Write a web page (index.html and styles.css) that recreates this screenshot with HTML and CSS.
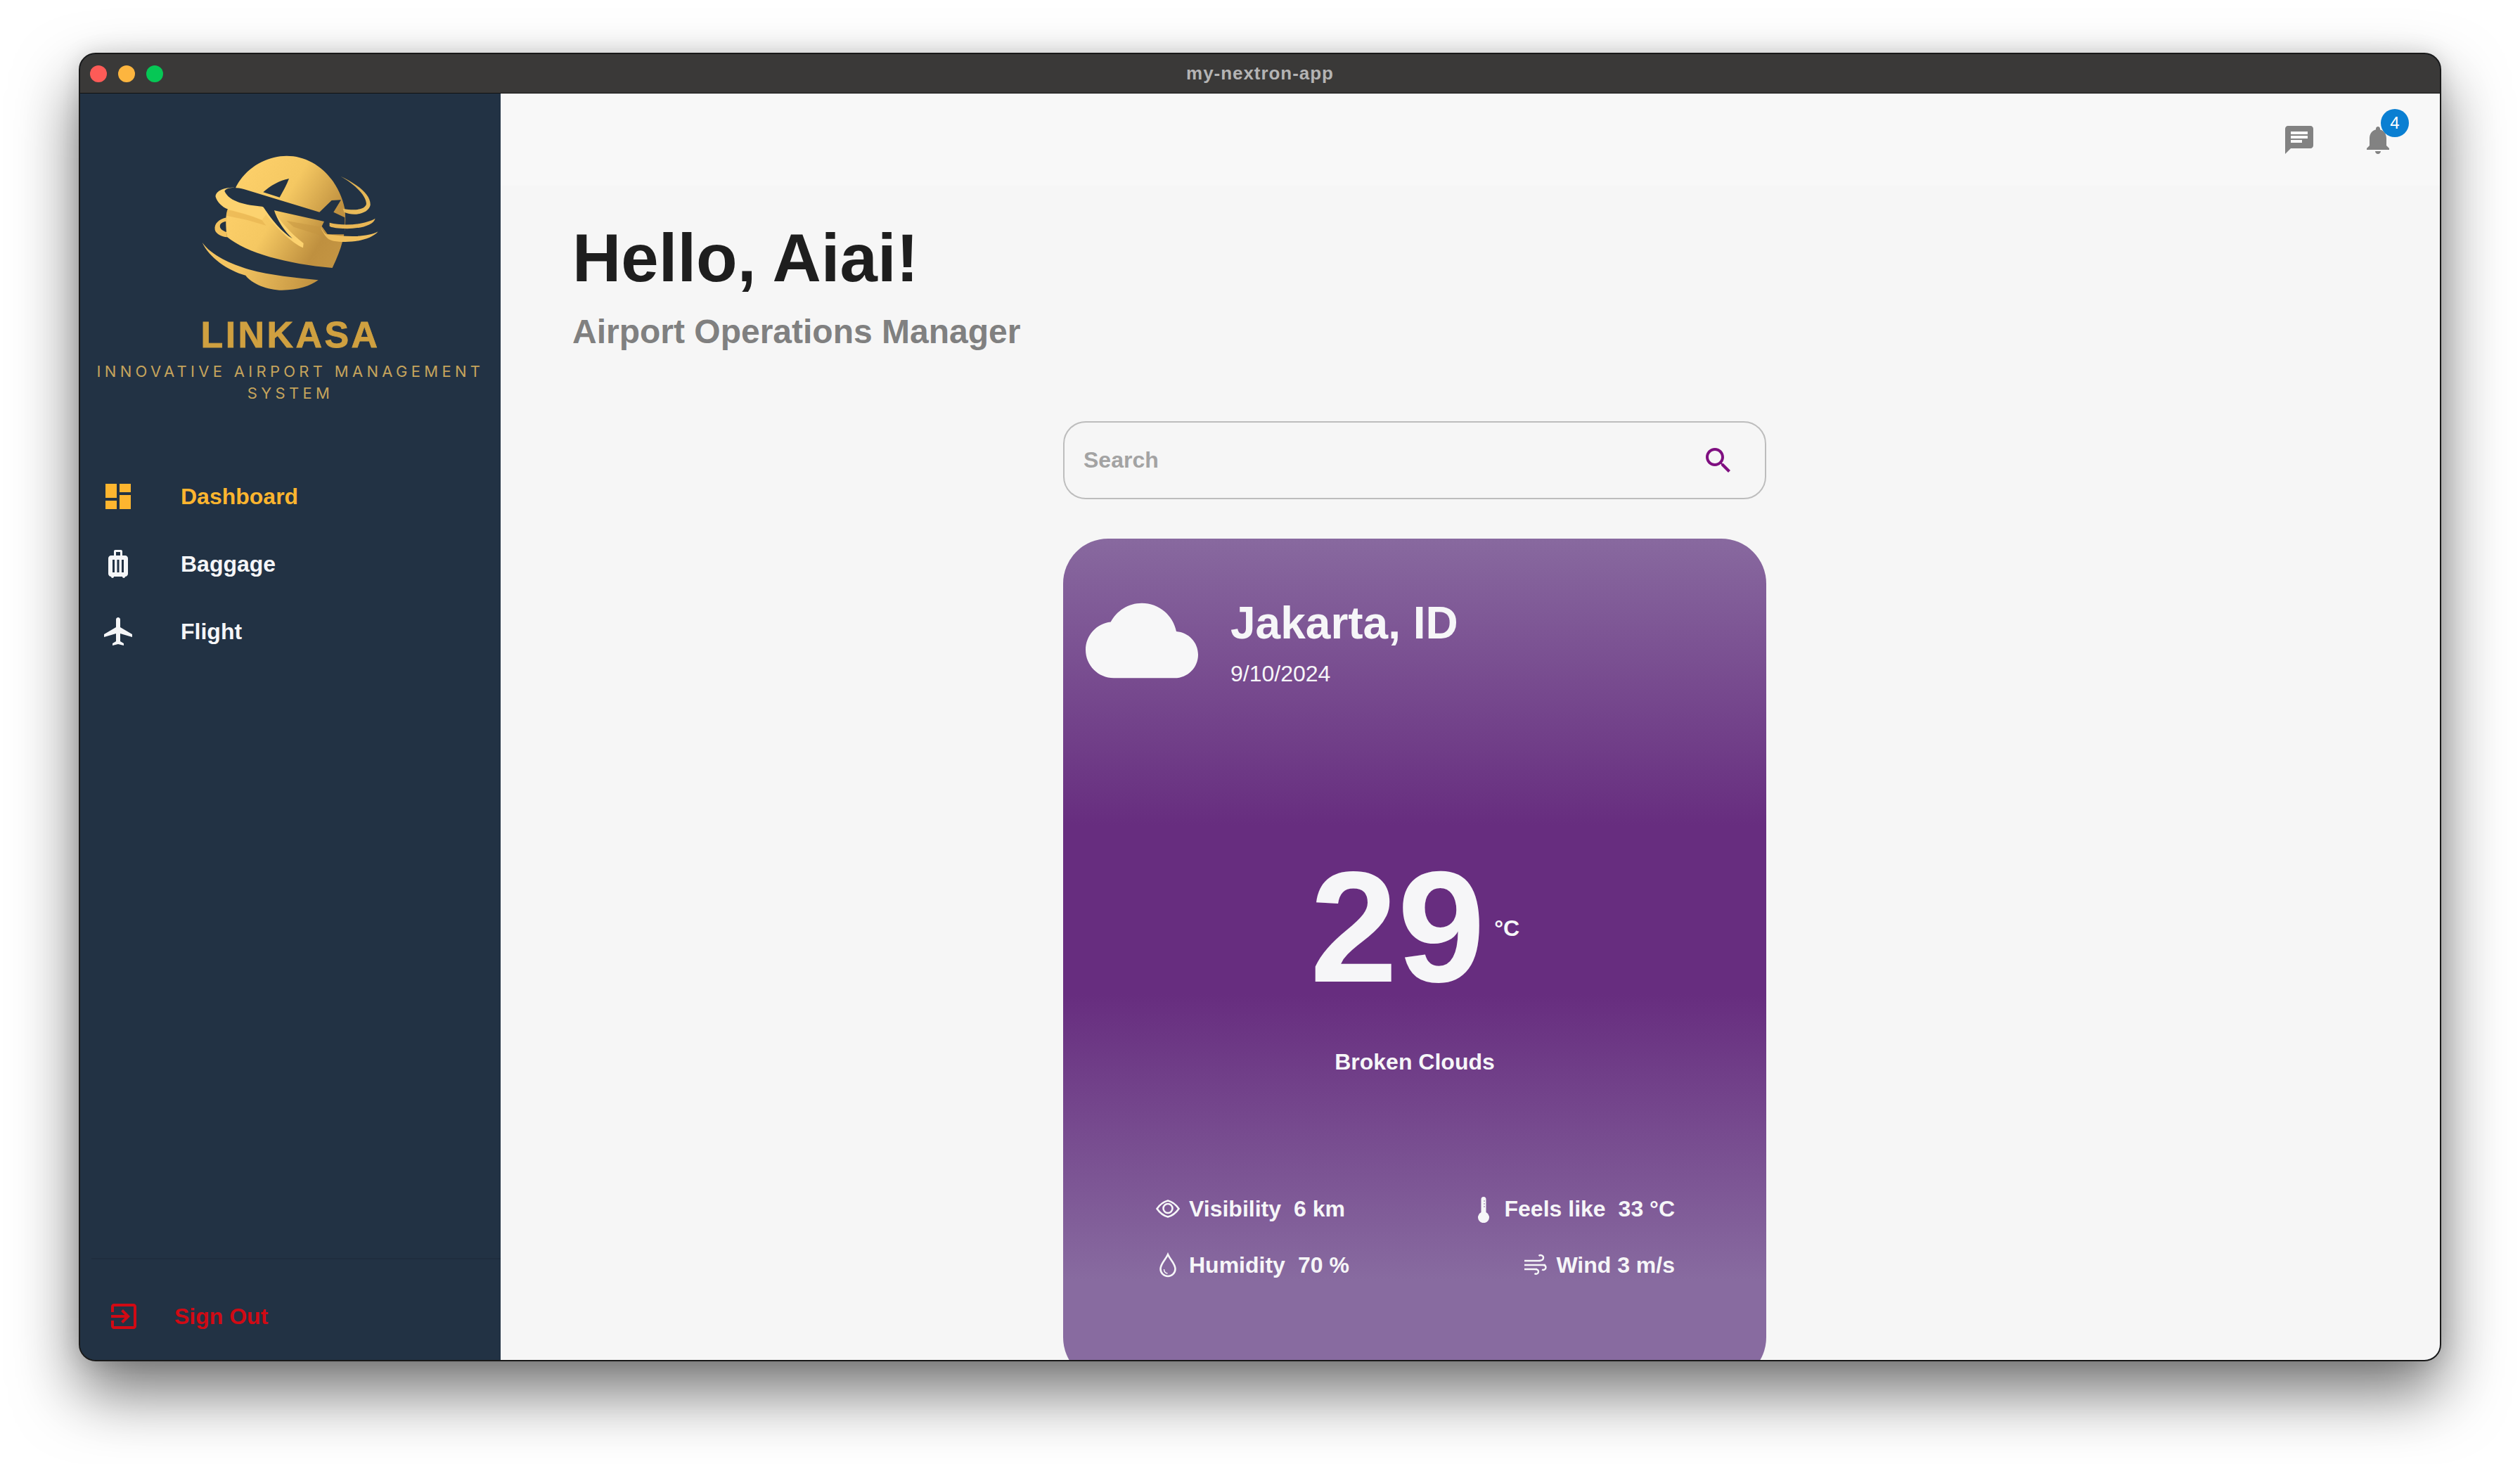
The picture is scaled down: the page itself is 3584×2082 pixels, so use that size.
FILE: index.html
```html
<!DOCTYPE html>
<html lang="en">
<head>
<meta charset="utf-8">
<title>my-nextron-app</title>
<link rel="stylesheet" href="styles.css">
</head>
<body>
<div class="window">
  <header class="titlebar">
    <div class="lights"><span class="light red"></span><span class="light yellow"></span><span class="light green"></span></div>
    <div class="title">my-nextron-app</div>
    <div></div>
  </header>
  <div class="app">
    <aside class="sidebar">
      <div class="brand">
        <svg class="logo" viewBox="0 0 1032 750" aria-hidden="true">
          <defs>
            <linearGradient id="gold" gradientUnits="userSpaceOnUse" x1="260" y1="230" x2="740" y2="520">
              <stop offset="0" stop-color="#fdd06a"/>
              <stop offset=".4" stop-color="#f5c862"/>
              <stop offset=".8" stop-color="#bf903f"/>
              <stop offset="1" stop-color="#c49543"/>
            </linearGradient>
            <linearGradient id="goldlow" gradientUnits="userSpaceOnUse" x1="300" y1="560" x2="640" y2="660">
              <stop offset="0" stop-color="#f3c461"/>
              <stop offset="1" stop-color="#bd8e3d"/>
            </linearGradient>
            <linearGradient id="goldright" gradientUnits="userSpaceOnUse" x1="700" y1="180" x2="880" y2="460">
              <stop offset="0" stop-color="#d9aa4d"/>
              <stop offset="1" stop-color="#f6c964"/>
            </linearGradient>
          </defs>
          <path fill="url(#gold)" d="M285 225C330 140 420 95 500 95C620 95 720 190 748 320C757 400 745 470 695 573C500 555 330 510 245 440C238 380 240 340 250 320Z"/>
          <path fill="url(#goldlow)" d="M140 465C170 530 250 585 325 605C350 640 420 668 480 668C550 668 600 650 635 625C540 615 430 605 340 580C260 555 180 520 140 465Z"/>
          <path fill="#f2c25e" d="M245 358C210 365 190 385 194 410C198 428 222 440 246 442L243 420C226 414 212 405 216 390C220 380 233 375 243 375Z"/>
          <path fill="#fcd26f" d="M275 230C225 230 195 248 197 270C205 295 225 312 247 322C300 335 350 350 395 368L420 335L300 270Z"/>
          <path fill="#e3ae4c" fill-opacity=".55" d="M246 325C300 335 350 352 395 370L412 392L330 368L243 350Z"/>
          <path fill="#c4943f" fill-opacity=".5" d="M500 372L645 398L668 440L600 420L530 398Z"/>
          <path fill="#223244" d="M400 250C430 222 470 200 510 192C500 220 485 245 470 272Z"/>
          <path fill="#fcd26f" d="M388 312L440 325C470 370 515 425 572 468L570 487C525 470 440 390 388 312Z"/>
          <path fill="#223244" d="M395 305L445 322C460 372 490 415 525 448C478 418 438 370 395 305Z"/>
          <path fill="#223244" d="M235 245C245 228 285 228 320 238L640 335L692 285L732 283L700 335L748 358V430H675L650 395L660 375L445 327L395 311C330 305 255 292 235 245Z"/>
          <path fill="url(#goldright)" d="M730 182C800 215 860 260 857 305C850 340 790 355 745 335L740 320C790 330 835 325 840 300C840 260 780 210 730 182Z"/>
          <path fill="#e8b655" d="M683 380C740 395 830 390 878 362C870 395 800 408 740 405C710 403 690 400 683 395Z"/>
          <path fill="#f0bf5c" d="M645 398C655 415 662 430 675 430C750 440 840 445 890 418C860 455 770 470 700 458C680 455 668 445 650 412Z"/>
        </svg>
        <div class="brand-name">LINKASA</div>
        <div class="brand-tag">INNOVATIVE AIRPORT MANAGEMENT SYSTEM</div>
      </div>
      <nav class="nav">
        <a class="nav-item active">
          <svg class="icon" viewBox="0 0 24 24"><path d="M3 13h8V3H3v10zm0 8h8v-6H3v6zm10 0h8V11h-8v10zm0-18v6h8V3h-8z"/></svg>
          <span>Dashboard</span>
        </a>
        <a class="nav-item">
          <svg class="icon" viewBox="0 0 24 24"><path d="M17 6h-2V3c0-.55-.45-1-1-1h-4c-.55 0-1 .45-1 1v3H7c-1.1 0-2 .9-2 2v11c0 1.1.9 2 2 2 0 .55.45 1 1 1s1-.45 1-1h6c0 .55.45 1 1 1s1-.45 1-1c1.1 0 2-.9 2-2V8c0-1.1-.9-2-2-2zM9.5 18H8V9h1.5v9zm3.25 0h-1.5V9h1.5v9zm3.25 0h-1.5V9H16v9zm-2.5-12h-3V3.5h3V6z"/></svg>
          <span>Baggage</span>
        </a>
        <a class="nav-item">
          <svg class="icon" viewBox="0 0 24 24"><path d="M22 16v-2l-8.5-5V3.5c0-.83-.67-1.5-1.5-1.5s-1.5.67-1.5 1.5V9L2 14v2l8.5-2.5V19L8 20.5V22l4-1 4 1v-1.5L13.5 19v-5.5L22 16z"/></svg>
          <span>Flight</span>
        </a>
      </nav>
      <div class="sidebar-foot">
        <a class="signout">
          <svg class="icon" viewBox="0 0 24 24"><path d="M10.09 15.59L11.5 17l5-5-5-5-1.41 1.41L12.67 11H3v2h9.67l-2.58 2.59zM19 3H5c-1.11 0-2 .9-2 2v4h2V5h14v14H5v-4H3v4c0 1.1.89 2 2 2h14c1.1 0 2-.9 2-2V5c0-1.1-.9-2-2-2z"/></svg>
          <span>Sign Out</span>
        </a>
      </div>
    </aside>
    <main class="main">
      <div class="topbar">
        <svg class="icon top-icon" viewBox="0 0 24 24"><path d="M20 2H4c-1.1 0-1.99.9-1.99 2L2 22l4-4h14c1.1 0 2-.9 2-2V4c0-1.1-.9-2-2-2zM6 9h12v2H6V9zm8 5H6v-2h8v2zm4-6H6V6h12v2z"/></svg>
        <div class="bell">
          <svg class="icon top-icon" viewBox="0 0 24 24"><path d="M12 22c1.1 0 2-.9 2-2h-4c0 1.1.89 2 2 2zm6-6v-5c0-3.07-1.64-5.64-4.5-6.32V4c0-.83-.67-1.5-1.5-1.5s-1.5.67-1.5 1.5v.68C7.63 5.36 6 7.92 6 11v5l-2 2v1h16v-1l-2-2z"/></svg>
          <span class="badge">4</span>
        </div>
      </div>
      <div class="content">
        <h1 class="hello">Hello, Aiai!</h1>
        <h2 class="role">Airport Operations Manager</h2>
        <div class="search">
          <span class="search-text">Search</span>
          <svg class="icon search-icon" viewBox="0 0 24 24"><path d="M15.5 14h-.79l-.28-.27C15.41 12.59 16 11.11 16 9.5 16 5.91 13.09 3 9.5 3S3 5.91 3 9.5 5.91 16 9.5 16c1.61 0 3.09-.59 4.23-1.57l.27.28v.79l5 4.99L20.49 19l-4.99-5zm-6 0C7.01 14 5 11.99 5 9.5S7.01 5 9.5 5 14 7.01 14 9.5 11.99 14 9.5 14z"/></svg>
        </div>
        <section class="weather">
          <div class="weather-head">
            <svg class="cloud" viewBox="0 0 24 24"><path d="M19.35 10.04C18.67 6.59 15.64 4 12 4 9.11 4 6.6 5.64 5.35 8.04 2.34 8.36 0 10.91 0 14c0 3.31 2.69 6 6 6h13c2.76 0 5-2.24 5-5 0-2.64-2.05-4.78-4.65-4.96z"/></svg>
            <div class="place">
              <div class="city">Jakarta, ID</div>
              <div class="date">9/10/2024</div>
            </div>
          </div>
          <div class="temp"><span class="temp-value">29</span><span class="temp-unit">°C</span></div>
          <div class="condition">Broken Clouds</div>
          <div class="details">
            <div class="detail">
              <svg class="d-icon" viewBox="0 0 40 40"><path class="d-line" d="M4.500 20C9 13.500 14 10 20 8.500c6 1.500 11 5 15.500 11.500C31 26.500 26 30 20 31.500 14 30 9 26.500 4.500 20z"/><circle class="d-line" cx="20" cy="19.500" r="6.500"/></svg>
              <span>Visibility</span><span class="d-value">6 km</span>
            </div>
            <div class="detail right">
              <svg class="d-icon" viewBox="0 0 40 40"><path class="d-fill" d="M16.500 6.500a3.500 3.500 0 0 1 7 0V25a8 8 0 1 1-7 0z"/><path class="d-mark" d="M20 9h2M20 13h2M20 17h2"/></svg>
              <span>Feels like</span><span class="d-value">33 °C</span>
            </div>
            <div class="detail">
              <svg class="d-icon" viewBox="0 0 40 40"><path class="d-line" d="M20 5c3 7 10.500 13 10.500 20.500a10.500 10.500 0 0 1-21 0C9.500 18 17 12 20 5z"/><path class="d-thin" d="M14.500 26c0 3.500 2 5.500 5 6"/></svg>
              <span>Humidity</span><span class="d-value">70 %</span>
            </div>
            <div class="detail right">
              <svg class="d-icon" viewBox="0 0 40 40"><path class="d-wind" d="M5 14h23M25 14c4 0 7-1.500 7-4.500S28 5 25.500 7M5 20h30M31 20c3 0 4.500 1.500 4.500 3.500S33 28 30 26.500M5 26h18M20 26c3 0 5 1.500 5 3.500S22 34 19.500 32"/></svg>
              <span>Wind 3 m/s</span>
            </div>
          </div>
        </section>
      </div>
    </main>
  </div>
</div>
</body>
</html>
```

FILE: styles.css
```css
* { box-sizing: border-box; }
html, body { margin: 0; height: 100%; }
body {
  background: #fff;
  padding: 75px 112px 0;
  font-family: "Liberation Sans", Arial, sans-serif;
  overflow: hidden;
}
.window {
  height: 1861px;
  border-radius: 24px;
  border: 2px solid #191919;
  box-shadow: 0 44px 90px rgba(0, 0, 0, .55), 0 0 30px rgba(0, 0, 0, .12);
  display: flex;
  flex-direction: column;
  overflow: hidden;
  background: #223244;
}
.titlebar {
  flex: none;
  height: 56px;
  background: #3a3938;
  border-bottom: 1px solid #111;
  display: grid;
  grid-template-columns: 1fr auto 1fr;
  align-items: center;
}
.lights { display: flex; gap: 16px; padding-left: 14px; }
.light { width: 24px; height: 24px; border-radius: 50%; }
.red { background: #fe5b57; }
.yellow { background: #fdb53f; }
.green { background: #06c755; }
.title { color: #b4b4b4; font-size: 26px; font-weight: 700; letter-spacing: .95px; }
.app { flex: 1; display: flex; min-height: 0; }

.sidebar {
  flex: none;
  width: 598px;
  background: #223244;
  display: flex;
  flex-direction: column;
  padding-top: 57px;
}
.brand { display: flex; flex-direction: column; align-items: center; }
.logo { width: 344px; height: 250px; display: block; }
.brand-name {
  margin-top: 6px;
  font-size: 52px;
  line-height: 60px;
  font-weight: 700;
  letter-spacing: 3.4px;
  -webkit-text-stroke: .8px #cfa040;
  color: #cfa040;
}
.brand-tag {
  width: 590px;
  margin-top: 7px;
  text-align: center;
  font-family: Inter, "Liberation Sans", sans-serif;
  font-size: 22px;
  line-height: 31px;
  letter-spacing: 5.3px;
  color: #c6a45c;
}
.nav { margin-top: 83px; display: flex; flex-direction: column; }
.nav-item {
  height: 96px;
  display: flex;
  align-items: center;
  gap: 65px;
  padding-left: 30px;
  color: #f5f6f8;
  fill: #f5f6f8;
  font-size: 32px;
  font-weight: 700;
}
.nav-item.active { color: #fdb52f; fill: #fdb52f; }
.icon { width: 48px; height: 48px; display: block; flex: none; }
.sidebar-foot {
  margin-top: auto;
  margin-left: 16px;
  height: 145px;
  border-top: 2px solid #1f2d3e;
  padding-top: 57px;
}
.signout {
  display: flex;
  align-items: center;
  gap: 48px;
  padding-left: 22px;
  color: #d10a14;
  fill: #d10a14;
  font-size: 32px;
  font-weight: 700;
}

.main { flex: 1; min-width: 0; background: #f6f6f6; display: flex; flex-direction: column; overflow: hidden; }
.topbar {
  flex: none;
  height: 131px;
  background: #f8f8f8;
  display: flex;
  justify-content: flex-end;
  align-items: center;
  gap: 64px;
  padding-right: 64px;
  fill: #828282;
}
.bell { position: relative; }
.badge {
  position: absolute;
  left: 28px;
  top: -20px;
  width: 40px;
  height: 40px;
  border-radius: 50%;
  background: #0a7fd2;
  color: #fff;
  font-size: 24px;
  line-height: 40px;
  text-align: center;
}
.content { padding: 47px 260px 0 102px; }
.hello { margin: 0; font-size: 96px; line-height: 112px; font-weight: 700; color: #1e1e1e; }
.role { margin: 21px 0 0; font-size: 48px; line-height: 56px; font-weight: 700; color: #808080; }
.search {
  width: 1000px;
  height: 111px;
  margin: 99px auto 0;
  border: 2px solid #bdbdbd;
  border-radius: 32px;
  display: flex;
  justify-content: space-between;
  align-items: center;
  padding: 0 42px 0 27px;
}
.search-text { font-size: 32px; font-weight: 700; color: #a3a3a3; }
.search-icon { fill: #7f0f80; }
.weather {
  width: 1000px;
  height: 1200px;
  margin: 56px auto 0;
  border-radius: 64px;
  padding: 65px 32px 0;
  color: #f6f6f8;
  background: linear-gradient(180deg, #88699f 0%, #672d7f 34%, #672d7f 54%, #886ba0 88%, #886ba0 100%);
}
.weather-head { display: flex; gap: 46px; }
.cloud { width: 160px; height: 160px; flex: none; fill: #f7f7f8; }
.place { padding-top: 18px; }
.city { font-size: 64px; line-height: 75px; font-weight: 700; }
.date { margin-top: 15px; font-size: 32px; line-height: 38px; }
.temp { margin-top: 215px; display: flex; justify-content: center; gap: 13px; }
.temp-value { font-size: 224px; line-height: 224px; font-weight: 700; }
.temp-unit { margin-top: 95px; font-size: 32px; line-height: 38px; font-weight: 700; }
.condition { margin-top: 61px; text-align: center; font-size: 32px; line-height: 38px; font-weight: 700; }
.details {
  margin-top: 170px;
  padding: 0 98px 0 97px;
  display: grid;
  grid-template-columns: 1fr 1fr;
  row-gap: 40px;
  font-size: 32px;
  line-height: 38px;
  font-weight: 700;
}
.detail { display: flex; align-items: center; gap: 10px; }
.detail.right { justify-content: flex-end; }
.d-value { margin-left: 8px; }
.d-icon { width: 40px; height: 40px; flex: none; }
.d-line { fill: none; stroke: #f6f6f8; stroke-width: 2.6; }
.d-thin { fill: none; stroke: #f6f6f8; stroke-width: 1.4; }
.d-fill { fill: #f6f6f8; }
.d-mark { fill: none; stroke: #8a6aa0; stroke-width: 1; }
.d-wind { fill: none; stroke: #f6f6f8; stroke-width: 2.4; }
```
